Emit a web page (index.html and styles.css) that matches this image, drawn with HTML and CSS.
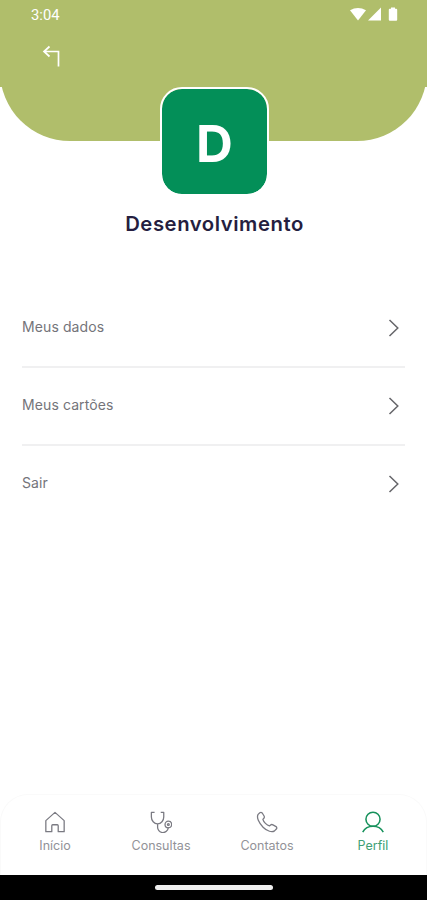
FILE: index.html
```html
<!DOCTYPE html>
<html lang="pt-BR">
<head>
<meta charset="utf-8">
<title>Perfil</title>
<link rel="stylesheet" href="styles.css">
</head>
<body>
<div class="screen">
  <header class="header">
    <div class="header-top">
      <div class="status">
        <span class="time">3:04</span>
        <svg class="status-icons" width="50" height="16" viewBox="0 0 50 16" fill="#fff">
          <path d="M1 3.200Q9 -1.200 17 3.200L9 13.400Z"/>
          <path d="M32 .5V13.500H19Z"/>
          <path d="M42 .5h4v1.200h1.200a1 1 0 0 1 1 1v10a1 1 0 0 1-1 1h-6.400a1 1 0 0 1-1-1V2.700a1 1 0 0 1 1-1H42Z"/>
        </svg>
      </div>
      <svg class="back" width="20" height="24" viewBox="0 0 20 24" fill="none" stroke="#fff" stroke-width="1.700">
        <path d="M7.500 1.500 2 6.500 7.500 11.500M2 6.500H16.500V21.500"/>
      </svg>
    </div>
    <div class="avatar">D</div>
  </header>
  <h1 class="name">Desenvolvimento</h1>
  <ul class="menu">
    <li class="row"><span>Meus dados</span><svg class="chevron" viewBox="0 0 12 20"><path d="M1.500 2 9.800 10 1.500 18"/></svg></li>
    <li class="row"><span>Meus cartões</span><svg class="chevron" viewBox="0 0 12 20"><path d="M1.500 2 9.800 10 1.500 18"/></svg></li>
    <li class="row"><span>Sair</span><svg class="chevron" viewBox="0 0 12 20"><path d="M1.500 2 9.800 10 1.500 18"/></svg></li>
  </ul>
  <nav class="tabs">
    <a class="tab"><svg viewBox="0 0 24 24"><path d="M2 10.500 12 1.500l10 9V22.500H15.500V16a1 1 0 0 0-1-1h-5a1 1 0 0 0-1 1v6.500H2Z"/></svg><span>Início</span></a>
    <a class="tab"><svg viewBox="0 0 24 24"><path d="M5 1.500H1.500V6.500C1.500 10.500 4.500 14 8.300 14S15 10.500 15 6.500V1.500H11.700M8.300 14v3.200a5.800 5.800 0 0 0 11.600 1V18.300"/><circle cx="20" cy="14.700" r="3.600"/><circle cx="20" cy="14.700" r="1"/></svg><span>Consultas</span></a>
    <a class="tab"><svg viewBox="0 0 24 24"><path d="M2.300 3.700 4.200 1.900Q5.500.900 6.800 2.200L8.800 5.500Q9.600 6.900 8.400 8.100L7.500 9.200C8.200 12 11.800 15.500 14.700 16.300L15.900 15.300Q17.100 14.300 18.500 15.100L21.900 17Q23.300 18.300 22.200 19.700L20.200 21.700C17.500 23.500 12.300 22.300 7.700 17.700S.3 7 2.300 3.700Z"/></svg><span>Contatos</span></a>
    <a class="tab active"><svg viewBox="0 0 24 24"><circle cx="12" cy="9" r="7.700"/><path d="M.8 23C3 19 7.500 16.700 12 16.700S21 19 23.200 23"/></svg><span>Perfil</span></a>
  </nav>
  <div class="gesture"><div class="pill"></div></div>
</div>
</body>
</html>
```
FILE: styles.css
```css
* { box-sizing: border-box; }
body { margin: 0; background: #fff; font-family: Inter, "Liberation Sans", sans-serif; }
.screen { width: 427px; height: 900px; display: flex; flex-direction: column; overflow: hidden; }
.header {
  height: 141px; flex: none; display: flex; flex-direction: column; align-items: center;
  background: #b0be6b; border-radius: 0 0 70px 70px;
}
.header-top { width: 427px; height: 87px; flex: none; background: #b0be6b; }
.status { display: flex; justify-content: space-between; padding: 7px 28px 0 31px; height: 45px; }
.time { color: #fff; font: 14.800px/16px Roboto, sans-serif; }
.status-icons { display: block; }
.back { display: block; margin-left: 42px; }
.avatar {
  width: 109px; height: 109px; flex: none; margin-left: 2px; border: 2.500px solid #fff; border-radius: 22px;
  background: #038f58; color: #fff; background-clip: padding-box; font-size: 51px; font-weight: 700; line-height: 110px; text-align: center;
}
.name { margin: 69px 0 0; padding-left: 2px; font-size: 20.300px; line-height: 27px; font-weight: 600; letter-spacing: .55px; text-align: center; color: #251e40; }
.menu { list-style: none; margin: 52px 22px 0; padding: 0; }
.row { height: 78.500px; display: flex; align-items: center; justify-content: space-between; padding-bottom: 2px; font-size: 14px; letter-spacing: .1px; color: #74747a; border-bottom: 2px solid #f0f0f1; }
.row:last-child { border-bottom: 0; padding-bottom: 5px; }
.chevron { width: 12px; height: 20px; margin-right: 5px; margin-top: 3px; fill: none; stroke: #66666a; stroke-width: 1.500; }
.tabs { margin: auto 0 0; height: 81px; flex: none; display: flex; padding-left: 1px; border: 1px solid #fafafa; border-bottom: 0; border-radius: 28px 28px 0 0; }
.tab { flex: 1 1 0; display: flex; flex-direction: column; align-items: center; padding-top: 16px; color: #929298; font-size: 12.500px; line-height: 16px; letter-spacing: 0; }
.tab svg { width: 22px; height: 22px; margin: 0 0 5px; fill: none; stroke: #7a7a82; stroke-width: 1.400; stroke-linejoin: round; }
.tab.active { color: #409f75; }
.tab.active svg { stroke: #16915b; stroke-width: 1.700; }
.gesture { height: 25px; flex: none; background: #000; padding-top: 10px; }
.pill { width: 118px; height: 5px; margin: 0 auto; border-radius: 3px; background: #eee; }
```
